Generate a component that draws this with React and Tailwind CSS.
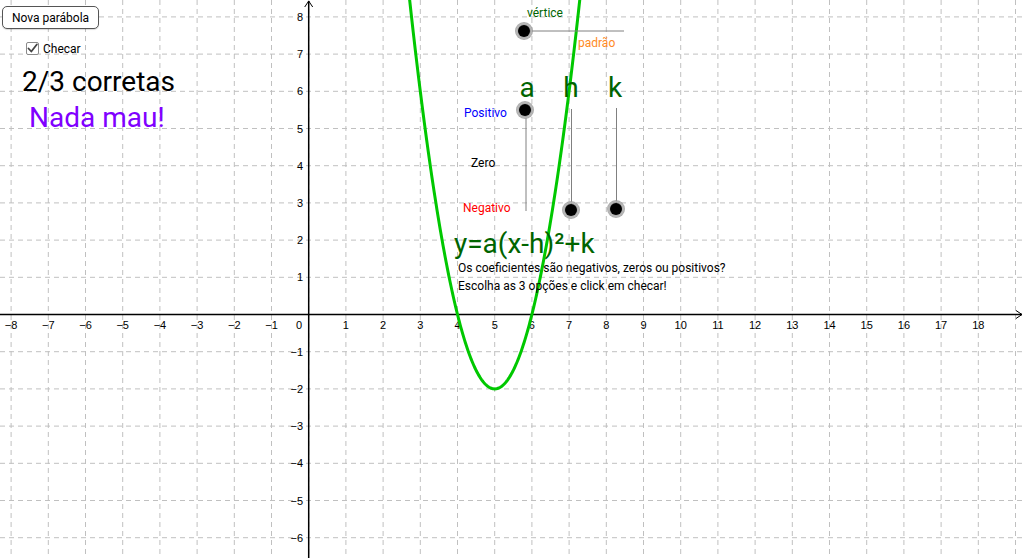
import React from 'react';

const OX = 308.7;
const OY = 314.5;
const U = 37.2;

const px = (x) => OX + x * U;
const py = (y) => OY - y * U;

const range = (a, b) => Array.from({ length: b - a + 1 }, (_, i) => a + i);

// y = 2(x-5)^2 - 2
const parabola = () => {
  const pts = [];
  for (let x = 2.55; x <= 7.45; x += 0.02) {
    const y = 2 * (x - 5) * (x - 5) - 2;
    pts.push(`${px(x).toFixed(2)},${py(y).toFixed(2)}`);
  }
  return pts.join(' ');
};

const Dot = ({ cx, cy }) => (
  <g>
    <circle cx={cx} cy={cy} r="9" fill="#9a9a9a" opacity="0.8" />
    <circle cx={cx} cy={cy} r="7.5" fill="none" stroke="#bdbdbd" strokeWidth="0.8" />
    <circle cx={cx} cy={cy} r="6" fill="#000" />
  </g>
);

const Graph = () => (
  <svg className="absolute inset-0" width="1024" height="558" viewBox="0 0 1024 558">
    <g stroke="#c0c0c0" strokeWidth="1" strokeDasharray="5 4">
      {range(-9, 19).map((n) => (
        <line key={`v${n}`} x1={px(n)} y1="0" x2={px(n)} y2="558" />
      ))}
      {range(-7, 9).map((m) => (
        <line key={`h${m}`} x1="0" y1={py(m)} x2="1024" y2={py(m)} />
      ))}
    </g>

    <g stroke="#000" strokeWidth="1.5" fill="none">
      <line x1="0" y1={OY} x2="1022" y2={OY} />
      <line x1={OX} y1="558" x2={OX} y2="1" />
      <polyline points={`1016,${OY - 4} 1022,${OY} 1016,${OY + 4}`} strokeWidth="1" />
      <polyline points={`${OX - 4},7 ${OX},1 ${OX + 4},7`} strokeWidth="1" />
    </g>

    <g fontFamily="'Liberation Sans', Arial, sans-serif" fontSize="11" fill="#000">
      {range(-8, 18)
        .filter((n) => n !== 0)
        .map((n) => (
          <text key={`xl${n}`} x={px(n)} y="329" textAnchor="middle">
            {n < 0 ? `\u2212${-n}` : n}
          </text>
        ))}
      {range(-6, 8)
        .filter((m) => m !== 0)
        .map((m) => (
          <text key={`yl${m}`} x="303" y={py(m) + 4} textAnchor="end">
            {m < 0 ? `\u2212${-m}` : m}
          </text>
        ))}
      <text x="302" y="329" textAnchor="end">0</text>
    </g>

    <polyline points={parabola()} fill="none" stroke="#00c800" strokeWidth="3" strokeLinejoin="round" />

    {/* sliders: vértice (horizontal), a / h / k (vertical) */}
    <g stroke="#808080" strokeWidth="1">
      <line x1="524" y1="31" x2="624" y2="31" />
      <line x1="526" y1="110" x2="526" y2="211" />
      <line x1="571.5" y1="109" x2="571.5" y2="210" />
      <line x1="616.5" y1="108" x2="616.5" y2="209" />
    </g>
    <Dot cx={524} cy={31} />
    <Dot cx={525} cy={110} />
    <Dot cx={571} cy={210} />
    <Dot cx={616} cy={209} />
  </svg>
);

export default function App() {
  return (
    <div className="relative w-[1024px] h-[558px] overflow-hidden bg-white font-['Roboto',_'Liberation_Sans',_sans-serif] leading-none">
      <Graph />

      {/* left controls */}
      <div className="absolute left-[2px] top-[6px] flex flex-col items-start">
        <button className="w-[97px] h-[23px] rounded-[5px] border-[1.5px] border-[#555] bg-white text-[12px] leading-none text-black shadow-[0_1px_1px_rgba(0,0,0,0.15)]">
          Nova parábola
        </button>
        <label className="mt-[13px] ml-[24px] flex items-center gap-[4px]">
          <span className="w-[13px] h-[13px] rounded-[2px] border-[1.5px] border-[#8a8a8a] bg-white flex items-center justify-center">
            <svg width="11" height="11" viewBox="0 0 11 11">
              <polyline points="1.5,5.5 4.3,8.5 9.8,1.5" fill="none" stroke="#444" strokeWidth="1.8" strokeLinecap="round" strokeLinejoin="round" />
            </svg>
          </span>
          <span className="text-[12px] text-black">Checar</span>
        </label>
        <div className="mt-[13px] ml-[20px] text-[28px] text-black whitespace-nowrap">2/3 corretas</div>
        <div className="mt-[8px] ml-[27px] text-[28px] text-[#8000ff] whitespace-nowrap">Nada mau!</div>
      </div>

      {/* slider captions */}
      <div className="absolute left-[527px] top-[7px] text-[12px] text-[#006400]">vértice</div>
      <div className="absolute left-[578px] top-[37px] text-[12px] text-[#ff8a24]">padrão</div>

      <div className="absolute left-[505px] top-[74px] flex text-[28px] text-[#006400]">
        <span className="w-[44px] text-center">a</span>
        <span className="w-[44px] text-center">h</span>
        <span className="w-[44px] text-center">k</span>
      </div>

      <div className="absolute left-[464px] top-[107px] text-[12px] text-[#0000ff]">Positivo</div>
      <div className="absolute left-[471px] top-[157px] text-[12px] text-black">Zero</div>
      <div className="absolute left-[463px] top-[202px] text-[12px] text-[#ff0000]">Negativo</div>

      {/* equation and instructions */}
      <div className="absolute left-[454px] top-[230px] flex flex-col whitespace-nowrap">
        <div className="text-[28px] text-[#006400]">y=a(x-h)²+k</div>
        <p className="mt-[1px] pl-[4px] text-[12px] leading-[18px] text-black">
          Os coeficientes são negativos, zeros ou positivos?
          <br />
          Escolha as 3 opções e click em checar!
        </p>
      </div>
    </div>
  );
}
